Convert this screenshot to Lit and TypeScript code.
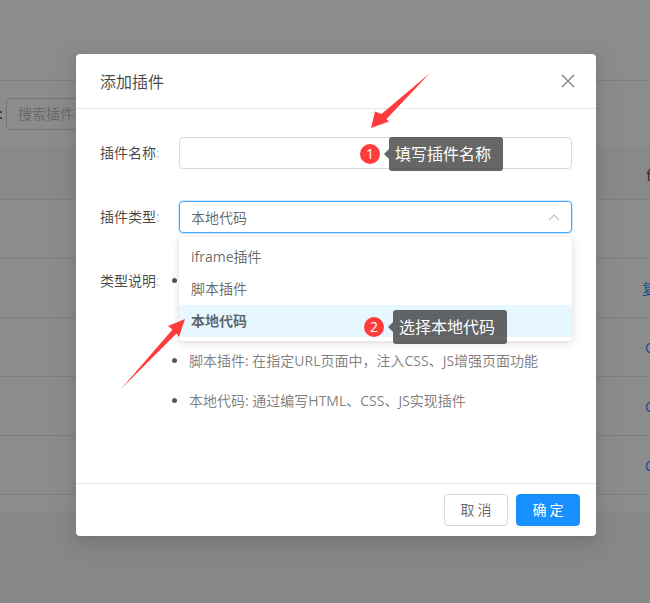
import { LitElement, html, css } from "lit";
import { customElement } from "lit/decorators.js";

@customElement("app-root")
export class AppRoot extends LitElement {
  static styles = css`
    :host { display: block; width: 650px; height: 603px; position: relative; overflow: hidden; background: #f7f7f7; font-family: "Open Sans", "Noto Sans CJK SC", sans-serif; font-size: 14px; color: rgba(0,0,0,.6); }
    * { box-sizing: border-box; }
    .page { height: 511px; background: #fff; display: flex; flex-direction: column; }
    .top { height: 81px; flex: none; border-bottom: 1px solid #e8e8e8; }
    .toolbar { height: 65px; flex: none; display: flex; align-items: flex-start; padding-top: 17px; }
    .colon { width: 6px; line-height: 32px; text-indent: -1px; color: rgba(0,0,0,.85); }
    .search { width: 200px; height: 32px; border: 1px solid #d9d9d9; border-radius: 4px; padding: 0 11px; line-height: 30px; color: #bfbfbf; }
    .row { flex: none; height: 59px; border-bottom: 1px solid #e8e8e8; display: flex; align-items: center; white-space: nowrap; }
    .row.head { height: 54px; background: #fafafa; color: rgba(0,0,0,.85); }
    .row span { flex: none; }
    .row a { color: #1890ff; }
    .head span { margin-left: 646px; }
    .zh { margin-left: 642px; }
    .en { margin-left: 645px; }
    .mask { position: absolute; inset: 0; background: rgba(0,0,0,.45); }
    .dialog { position: absolute; left: 76px; top: 54px; width: 520px; height: 482px; background: #fff; border-radius: 4px; display: flex; flex-direction: column; box-shadow: 0 3px 6px -4px rgba(0,0,0,.12), 0 6px 16px rgba(0,0,0,.08), 0 9px 28px 8px rgba(0,0,0,.05); }
    .dh { height: 55px; flex: none; border-bottom: 1px solid #e8e8e8; display: flex; align-items: center; justify-content: space-between; padding: 0 21px 0 24px; }
    .title { font-size: 16px; color: rgba(0,0,0,.72); }
    .close { display: block; width: 14px; height: 14px; }
    .body { flex: 1; padding: 28px 24px 0; display: flex; flex-direction: column; gap: 32px; }
    .field { display: flex; align-items: flex-start; }
    .label { width: 79px; flex: none; line-height: 32px; color: rgba(0,0,0,.72); white-space: nowrap; }
    .label i { font-style: normal; color: rgba(0,0,0,.25); }
    .input { flex: 1; height: 32px; border: 1px solid #d9d9d9; border-radius: 4px; }
    .select { flex: 1; height: 32px; border: 1px solid #40a9ff; border-radius: 4px; box-shadow: 0 0 0 1px rgba(24,144,255,.2); display: flex; align-items: center; justify-content: space-between; padding: 0 11px 1px; }
    .select svg { display: block; }
    ul { margin: 0 0 0 -7px; padding: 0; list-style: none; flex: 1; }
    li { height: 40px; line-height: 32px; display: flex; gap: 12px; white-space: nowrap; color: rgba(0,0,0,.52); }
    li.tall { height: 80px; }
    li::before { content: ""; width: 5px; height: 5px; flex: none; margin-top: 13px; border-radius: 50%; background: #595959; }
    .df { height: 53px; flex: none; border-top: 1px solid #e8e8e8; display: flex; justify-content: flex-end; gap: 8px; padding: 10px 16px; }
    .btn { width: 64px; height: 32px; border-radius: 4px; border: 1px solid #d9d9d9; background: #fff; text-align: center; line-height: 30px; letter-spacing: 3px; text-indent: 3px; }
    .btn.primary { background: #1890ff; border-color: #1890ff; color: #fff; box-shadow: 0 2px 0 rgba(0,0,0,.045); }
    .dropdown { position: absolute; left: 179px; top: 237px; width: 393px; height: 104px; padding: 4px 0; background: #fff; border-radius: 4px; box-shadow: 0 2px 8px rgba(0,0,0,.15); }
    .opt { height: 32px; line-height: 32px; padding: 0 12px; color: rgba(0,0,0,.6); }
    .opt.active { background: #e6f7ff; font-weight: 600; }
    .arrows { position: absolute; left: 0; top: 0; width: 650px; height: 603px; pointer-events: none; }
    .note { position: absolute; height: 34px; width: 114px; padding-left: 6px; background: rgba(51,51,51,.75); border-radius: 3px; color: #fff; font-size: 16px; line-height: 34px; white-space: nowrap; }
    .note::before { content: ""; position: absolute; left: -5px; top: 12px; border: 5px solid transparent; border-left: 0; border-right-color: rgba(51,51,51,.75); }
    .badge { position: absolute; width: 20px; height: 20px; border-radius: 50%; background: #ff3b3b; color: #fff; font-size: 14px; line-height: 20px; text-align: center; }
    .n1 { left: 389px; top: 137px; } .b1 { left: 360px; top: 144px; }
    .n2 { left: 393px; top: 310px; } .b2 { left: 364px; top: 317px; }
  `;

  render() {
    return html`
      <div class="page">
        <div class="top"></div>
        <div class="toolbar"><span class="colon">:</span><div class="search">搜索插件</div></div>
        <div class="row head"><span>创</span></div>
        <div class="row"></div>
        <div class="row"><a class="zh">复</a></div>
        <div class="row"><a class="en">C</a></div>
        <div class="row"><a class="en">C</a></div>
        <div class="row"><a class="en">C</a></div>
      </div>
      <div class="mask"></div>
      <div class="dialog">
        <div class="dh">
          <span class="title">添加插件</span>
          <svg class="close" viewBox="0 0 14 14"><path d="M1 1 13 13M13 1 1 13" fill="none" stroke="#808080" stroke-width="1.3"/></svg>
        </div>
        <div class="body">
          <div class="field"><span class="label">插件名称<i>:</i></span><div class="input"></div></div>
          <div class="field"><span class="label">插件类型<i>:</i></span>
            <div class="select"><span>本地代码</span>
              <svg width="12" height="8" viewBox="0 0 12 8"><path d="M1 7 6 2l5 5" fill="none" stroke="#bfbfbf" stroke-width="1.1"/></svg>
            </div>
          </div>
          <div class="field"><span class="label">类型说明<i>:</i></span>
            <ul>
              <li class="tall"></li>
              <li>脚本插件: 在指定URL页面中，注入CSS、JS增强页面功能</li>
              <li>本地代码: 通过编写HTML、CSS、JS实现插件</li>
            </ul>
          </div>
        </div>
        <div class="df"><div class="btn">取消</div><div class="btn primary">确定</div></div>
      </div>
      <div class="dropdown">
        <div class="opt">iframe插件</div>
        <div class="opt">脚本插件</div>
        <div class="opt active">本地代码</div>
      </div>
      <svg class="arrows" viewBox="0 0 650 603">
        <polygon fill="#ff3b3b" points="430,73 381.5,114 375,111.5 371,128 389,121.5 386.5,119"/>
        <polygon fill="#ff3b3b" points="185,319 168,326 172.5,329.5 121,389 176.5,333.5 179,337"/>
      </svg>
      <div class="badge b1">1</div><div class="note n1">填写插件名称</div>
      <div class="badge b2">2</div><div class="note n2">选择本地代码</div>
    `;
  }
}
